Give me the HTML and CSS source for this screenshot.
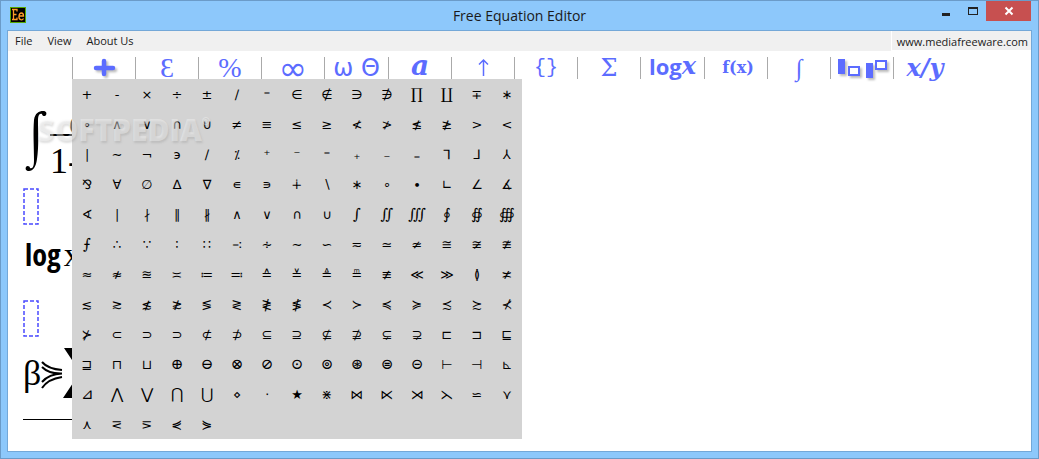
FILE: index.html
```
<!DOCTYPE html>
<html lang="en">
<head>
    <meta charset="UTF-8">
    <meta name="viewport" content="width=device-width, initial-scale=1.0">
    <title>Free Equation Editor</title>
    <link rel="stylesheet" href="styles.css">
</head>
<body>
    <div class="window">
        <header class="titlebar">
            <svg class="app-icon" width="16" height="16" viewBox="0 0 16 16">
                <rect x="0.5" y="0.5" width="15" height="15" fill="#000" stroke="#57a800"/>
                <path d="M2 2.5h5v2M3.5 2.5v10M3.5 7.5h3M2 12.5h5v-2M9.500 9h4c0-4-4-4-4.500 0c-.5 4.500 3.500 4.500 4.500 2.500" fill="none" stroke="#ff9c28" stroke-width="1.300"/>
            </svg>
            <h1>Free Equation Editor</h1>
            <div class="window-buttons">
                <button type="button" aria-label="Minimize"><svg width="12" height="12" viewBox="0 0 12 12"><path d="M2 8h8v3H2z" fill="#222"/></svg></button>
                <button type="button" aria-label="Maximize"><svg width="12" height="12" viewBox="0 0 12 12"><path d="M1 2h10v8H1zM2 4v5h8V4z" fill="#222" fill-rule="evenodd"/></svg></button>
                <button type="button" class="close" aria-label="Close"><svg width="12" height="12" viewBox="0 0 12 12"><path d="M2.500 2.500l7 7M9.500 2.500l-7 7" stroke="#fff" stroke-width="2"/></svg></button>
            </div>
        </header>

        <main class="client">
            <nav class="menubar">
                <div class="menus">
                    <button type="button">File</button>
                    <button type="button">View</button>
                    <button type="button">About Us</button>
                </div>
                <a href="http://www.mediafreeware.com">www.mediafreeware.com</a>
            </nav>

            <div class="toolbar">
                <button type="button" aria-label="Operators"><svg width="24" height="24" viewBox="0 0 24 24"><path d="M12 5v13M4 12h17" stroke="#5c6cff" stroke-width="4.500" stroke-linecap="round"/></svg></button>
                <button type="button" class="tool-serif">Ɛ</button>
                <button type="button" class="tool-serif">%</button>
                <button type="button" class="tool-inf">∞</button>
                <button type="button" class="tool-greek">ω Θ</button>
                <button type="button" class="tool-script">a</button>
                <button type="button" aria-label="Arrows"><svg class="flat" width="16" height="22" viewBox="0 0 16 22"><path d="M8.500 19V3M4 7.500L8.500 3l4.500 4.500" fill="none" stroke="#5c6cff" stroke-width="1.500"/></svg></button>
                <button type="button" class="tool-brace">{}</button>
                <button type="button" class="tool-sum">Σ</button>
                <button type="button" class="tool-log">log<i>x</i></button>
                <button type="button" class="tool-fx">f(x)</button>
                <button type="button" class="tool-int">∫</button>
                <button type="button" aria-label="Scripts"><svg width="52" height="22" viewBox="0 0 52 22"><path d="M2 2h7v15H2zM30 6h7v15h-7z" fill="#5c6cff"/><path d="M13 10h10v8H13zM40 4h10v8H40z" fill="#fff" stroke="#5c6cff" stroke-width="2"/></svg></button>
                <button type="button" class="tool-frac">x/y</button>
            </div>

            <section class="sheet">
                <div class="equation integral">
                    <svg width="22" height="62" viewBox="0 0 22 62"><path d="M9 10C10 3 14 1 18 1c3 0 4 2 3 4c-1 2-4 1-4-1c-3-1-4 2-4 7c0 12 1 25-1 38c-1 8-4 12-8 12c-3 0-4-2-3-4c1-2 4-1 4 1c3 1 4-2 4-8c0-13-1-28 0-40z"/></svg>
                    <div class="fraction">
                        <span class="numerator">d</span>
                        <span class="denominator">1-</span>
                    </div>
                </div>
                <svg class="slot" width="16" height="37" viewBox="0 0 16 37"><rect x="1" y="1" width="14" height="35" fill="none" stroke="#4a4aff" stroke-width="1.500" stroke-dasharray="4 2"/></svg>
                <div class="equation log"><span>log</span>x</div>
                <svg class="slot" width="16" height="37" viewBox="0 0 16 37"><rect x="1" y="1" width="14" height="35" fill="none" stroke="#4a4aff" stroke-width="1.500" stroke-dasharray="4 2"/></svg>
                <div class="equation beta">β<svg width="22" height="36" viewBox="0 0 22 36"><path d="M1 7Q7 14 21 15M1 12Q8 19 21 18.500Q8 19 1 27M1 33Q7 24 21 22" fill="none" stroke="#000" stroke-width="2"/></svg><svg width="40" height="52" viewBox="0 0 40 52"><path d="M1 1h38v12L30 5H14l13 20L12 47h18l9-8v12H0l10-15 7-11z"/></svg></div>
                <div class="rule"></div>
            </section>

            <div class="palette" id="palette"></div>
            <div class="watermark">SOFTPEDIA<sup>®</sup></div>
        </main>
    </div>

    <script>
        const rows = [
            '+-×÷±∕⁼∈∉∋∌∏∐∓∗',
            '∘∧∨∩∪≠≡≤≥≮≯≰≱><',
            '∣∼¬э∕⁒⁺⁻⁼₊₋₌⅂⅃⅄',
            '⅋∀∅∆∇∊∍∔∖∗∘∙∟∠∡',
            '∢∣∤∥∦∧∨∩∪∫∬∭∮∯∰',
            '⨍∴∵∶∷∹∻∼∽≂≃≄≅≆≇',
            '≈≉≊≍≔≕≙≚≜≞≢≪≫≬≭',
            '≲≳≴≵≶≷≹≸≺≻≼≽≾≿⊀',
            '⊁⊂⊃⊃⊄⊅⊆⊇⊈⊉⊊⊋⊏⊐⊑',
            '⊒⊓⊔⊕⊖⊗⊘⊙⊚⊛⊜⊝⊢⊣⊾',
            '⊿⋀⋁⋂⋃⋄⋅★⋇⋈⋉⋊⋋⋍⋎',
            '⋏⋜⋝⋞⋟'
        ];
        const palette = document.getElementById('palette');

        rows.forEach(function(row) {
            Array.from(row).forEach(function(symbol) {
                const button = document.createElement('button');
                button.type = 'button';
                button.textContent = symbol;
                if ('∏∐∫∬∭∮∯∰⨍⋀⋁⋂⋃⊿⊕⊖⊗⊘⊙⊚⊛⊜⊝'.includes(symbol)) {
                    button.className = 'tall';
                }
                palette.appendChild(button);
            });
        });
    </script>
</body>
</html>
```
FILE: styles.css
```
* {
    box-sizing: border-box;
}
body {
    margin: 0;
    font-family: "Open Sans", "Noto Sans", sans-serif;
    color: #1a1a1a;
}
button {
    margin: 0;
    padding: 0;
    border: none;
    background: none;
    font: inherit;
    color: inherit;
}
.window {
    display: flex;
    flex-direction: column;
    min-height: 100vh;
    padding: 0 7px 7px;
    background-color: #8dc8fb;
    border: 1px solid #6b9bc8;
}
.titlebar {
    display: grid;
    grid-template-columns: 1fr auto 1fr;
    height: 30px;
}
.app-icon {
    margin: 6px 2px;
}
h1 {
    margin: 0;
    font-size: 14px;
    font-weight: normal;
    line-height: 29px;
}
.window-buttons {
    display: flex;
    justify-content: flex-end;
    align-items: flex-start;
}
.window-buttons button {
    display: flex;
    align-items: center;
    justify-content: center;
    width: 27px;
    height: 20px;
}
.window-buttons .close {
    width: 45px;
    background-color: #c75050;
}
.client {
    position: relative;
    flex: 1;
    display: flex;
    flex-direction: column;
    background-color: #fff;
    outline: 1px solid #74a8d8;
}
.menubar {
    display: flex;
    gap: 1px;
    height: 20px;
    font-size: 11px;
    line-height: 20px;
}
.menus {
    flex: 1;
    display: flex;
    gap: 15px;
    padding-left: 7px;
    background-color: #f0f0f0;
}
.menubar a {
    height: 19px;
    padding: 0 3px 0 5px;
    background-color: #f0f0f0;
    color: #1a1a1a;
    line-height: 21px;
    text-decoration: none;
}
.toolbar {
    display: grid;
    grid-template-columns: repeat(4, 63px) 64px repeat(4, 63px) 64px repeat(4, 63px);
    height: 28px;
    padding: 6px 0 0 64px;
    color: #5c6cff;
    text-shadow: 2px 2px 2px #bbb;
}
.toolbar button {
    display: flex;
    align-items: center;
    justify-content: center;
    height: 22px;
    border-left: 1px solid #aaa;
    line-height: 22px;
    white-space: nowrap;
}
.toolbar svg {
    filter: drop-shadow(2px 2px 1px #bbb);
}
.toolbar .flat {
    filter: none;
}
.toolbar .tool-serif {
    font: 28px/22px "Liberation Serif", serif;
}
.toolbar .tool-inf {
    font: 34px/22px "DejaVu Sans", sans-serif;
}
.toolbar .tool-greek {
    font: 24px/22px "DejaVu Sans", sans-serif;
    text-shadow: none;
}
.toolbar .tool-script {
    padding-bottom: 4px;
    font: italic bold 28px/22px "DejaVu Serif", serif;
}
.toolbar .tool-brace {
    font: 20px/22px "Liberation Mono", monospace;
}
.toolbar .tool-sum {
    font: 24px/22px "DejaVu Serif", serif;
}
.toolbar .tool-log {
    padding-bottom: 4px;
    font: bold 22px/22px "Open Sans", sans-serif;
}
.toolbar .tool-log i,
.toolbar .tool-frac {
    font: italic bold 24px/22px "DejaVu Serif", serif;
}
.toolbar .tool-fx {
    padding-left: 4px;
    font: bold 16px/22px "DejaVu Serif", serif;
}
.toolbar .tool-int {
    font: italic 24px/22px "Liberation Serif", serif;
}
.sheet {
    flex: 1;
    padding: 24px 0 0 15px;
    overflow: hidden;
    font-family: "Liberation Serif", serif;
    color: #000;
}
.equation {
    display: flex;
}
.integral {
    height: 77px;
    gap: 3px;
    padding: 7px 0 0 2px;
}
.fraction {
    display: flex;
    flex-direction: column;
    width: 120px;
    font-size: 36px;
    line-height: 24px;
}
.numerator {
    padding-left: 19px;
}
.denominator {
    padding-top: 13px;
    border-top: 2px solid #000;
}
.slot {
    display: block;
    margin-top: 8px;
}
.log {
    height: 67px;
    align-items: center;
    gap: 3px;
    padding: 0 0 8px 2px;
    font-size: 34px;
}
.log span {
    font: bold 30px "Liberation Sans Narrow", "Open Sans Condensed", sans-serif;
}
.beta {
    height: 72px;
    align-items: center;
    font-size: 36px;
    line-height: 36px;
}
.rule {
    width: 120px;
    border-top: 1px solid #000;
    margin-top: 10px;
}
/* symbol drop-down, opened over the sheet */
.palette {
    position: absolute;
    top: 48px;
    left: 64px;
    display: grid;
    grid-template-columns: repeat(15, 30px);
    grid-auto-rows: 30px;
    background-color: #d3d3d3;
    font-family: "DejaVu Sans", sans-serif;
    font-size: 13px;
    color: #000;
}
.palette .tall {
    font-family: "DejaVu Serif", serif;
    font-size: 15px;
}
.watermark {
    position: absolute;
    top: 78px;
    left: 29px;
    font: 800 30px/42px "Open Sans", sans-serif;
    color: rgba(255, 255, 255, 0.35);
    text-shadow: 1px 2px 2px rgba(130, 130, 130, 0.25);
    pointer-events: none;
}
.watermark sup {
    font-size: 10px;
    line-height: 10px;
    vertical-align: 16px;
}
```
